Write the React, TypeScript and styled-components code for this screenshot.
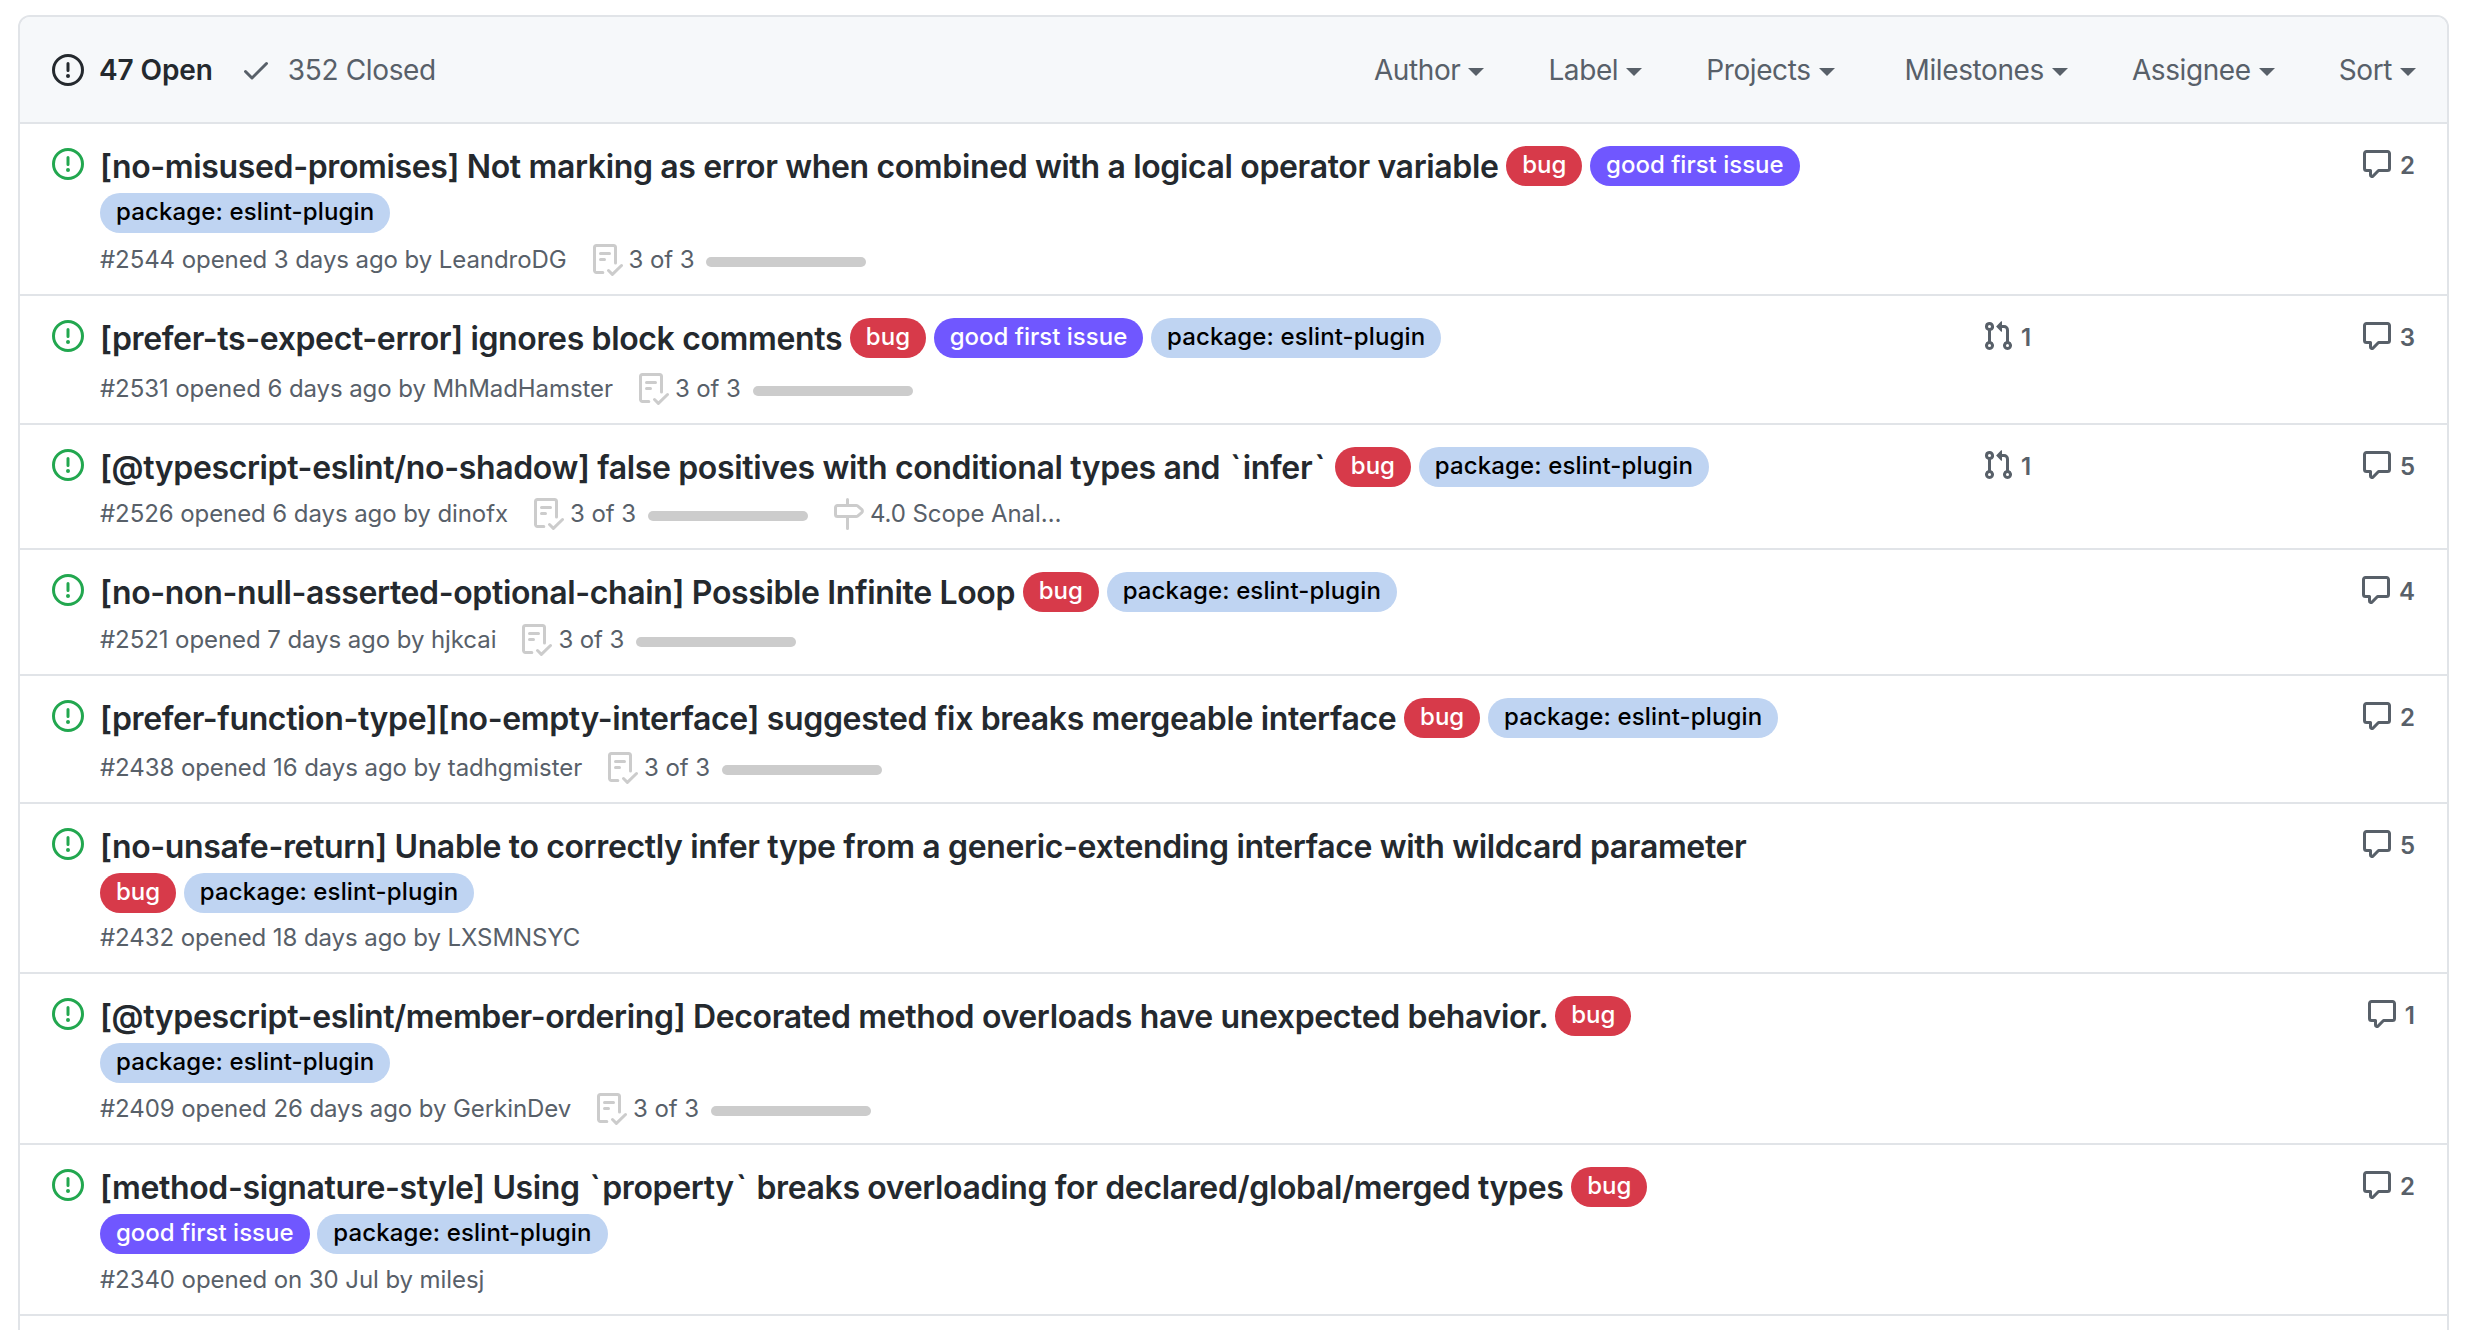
import React from "react";
import styled, { createGlobalStyle } from "styled-components";

const Global = createGlobalStyle`
  html, body { margin: 0; padding: 0; background: #fff; height: 1330px; overflow: hidden; }
  body { font-family: Inter, "Liberation Sans", sans-serif; color: #24292e; }
`;

const Page = styled.div`
  padding: 15px 17px 0 18px;
`;
const Box = styled.div`
  border: 2px solid #e1e4e8;
  border-radius: 12px;
  min-height: 1400px;
  box-sizing: border-box;
`;
const Header = styled.div`
  display: flex;
  align-items: center;
  justify-content: space-between;
  height: 105px;
  padding: 0 31px 0 32px;
  background: #f6f8fa;
  border-radius: 10px 10px 0 0;
  border-bottom: 2px solid #e1e4e8;
  font-size: 28px;
  line-height: 42px;
`;
const States = styled.div`
  display: flex;
  align-items: center;
  gap: 27px;
`;
const State = styled.span<{ $active?: boolean }>`
  display: inline-flex;
  align-items: center;
  gap: ${(p) => (p.$active ? 15 : 16)}px;
  font-weight: ${(p) => (p.$active ? 600 : 400)};
  letter-spacing: ${(p) => (p.$active ? "-0.1px" : "-0.35px")};
  color: ${(p) => (p.$active ? "#24292e" : "#586069")};
`;
const Filters = styled.div`
  display: flex;
  gap: 64px;
`;
const Filter = styled.span<{ $extra?: boolean }>`
  display: inline-flex;
  align-items: center;
  gap: 8px;
  margin-left: ${(p) => (p.$extra ? 6 : 0)}px;
  letter-spacing: -0.4px;
  color: #586069;
`;
const Caret = styled.i`
  display: inline-block;
  margin-top: 5px;
  border-style: solid;
  border-width: 8px 8px 0;
  border-color: #586069 transparent transparent;
`;
const Row = styled.div`
  display: grid;
  grid-template-columns: 48px 1720px 1fr 120px;
  padding: 19px 32px 16px 32px;
  border-bottom: 2px solid #e1e4e8;
`;
const Lead = styled.div`
  color: #22a74f;
  height: 32px;
  padding-top: 5px;
`;
const Main = styled.div``;
const Title = styled.div`
  font-size: 32px;
  font-weight: 600;
  line-height: 47px;
  letter-spacing: -0.36px;
  color: #24292e;
`;
const Tick = styled.span`
  padding: 0 2px;
`;
const Label = styled.span<{ $bg: string; $fg: string; $track: number }>`
  display: inline-block;
  height: 40px;
  padding: 0 16px;
  border-radius: 20px;
  font-size: 24px;
  font-weight: 500;
  line-height: 38px;
  letter-spacing: ${(p) => p.$track}px;
  vertical-align: 5px;
  background: ${(p) => p.$bg};
  color: ${(p) => p.$fg};
`;
const Meta = styled.div<{ $gap: number }>`
  display: flex;
  align-items: center;
  font-size: 24px;
  line-height: 36px;
  letter-spacing: -0.08px;
  margin-top: ${(p) => 5 + p.$gap}px;
  color: #586069;
`;
const Task = styled.span`
  display: inline-flex;
  align-items: center;
  margin-left: 24px;
  gap: 6px;
  color: #ccc;
`;
const TaskText = styled.span`
  color: #586069;
`;
const Bar = styled.span`
  display: inline-block;
  width: 160px;
  height: 10px;
  margin-left: 6px;
  margin-top: 3px;
  border-radius: 5px;
  background: #ccc;
`;
const Linked = styled.div`
  display: flex;
  gap: 7px;
  font-size: 24px;
  font-weight: 600;
  line-height: 36px;
  color: #586069;
  margin-top: 5px;
  padding-left: 162px;
`;
const Comments = styled.div`
  display: flex;
  justify-content: flex-end;
  gap: 7px;
  font-size: 24px;
  font-weight: 600;
  line-height: 36px;
  color: #586069;
  margin-top: 5px;
`;
const Glyph = styled.svg`
  display: block;
  flex: none;
  fill: currentColor;
`;

const paths = {
  issue:
    "M8 1.5a6.5 6.5 0 100 13 6.5 6.5 0 000-13zM0 8a8 8 0 1116 0A8 8 0 010 8zm9 3a1 1 0 11-2 0 1 1 0 012 0zm-.25-6.25a.75.75 0 00-1.5 0v3.5a.75.75 0 001.5 0v-3.5z",
  check:
    "M13.78 4.22a.75.75 0 010 1.06l-7.25 7.25a.75.75 0 01-1.06 0L2.22 9.28a.75.75 0 011.06-1.06L6 10.94l6.72-6.72a.75.75 0 011.06 0z",
  comment:
    "M2.75 2.5a.25.25 0 00-.25.25v7.5c0 .138.112.25.25.25h2a.75.75 0 01.75.75v2.19l2.72-2.72a.75.75 0 01.53-.22h4.5a.25.25 0 00.25-.25v-7.5a.25.25 0 00-.25-.25H2.75zM1 2.75C1 1.784 1.784 1 2.75 1h10.5c.966 0 1.75.784 1.75 1.75v7.5A1.75 1.75 0 0113.25 12H9.06l-2.573 2.573A1.457 1.457 0 014 13.543V12H2.75A1.75 1.75 0 011 10.25v-7.5z",
  pr: "M7.177 3.073L9.573.677A.25.25 0 0110 .854v4.792a.25.25 0 01-.427.177L7.177 3.427a.25.25 0 010-.354zM3.75 2.5a.75.75 0 100 1.5.75.75 0 000-1.5zm-2.25.75a2.25 2.25 0 113 2.122v5.256a2.251 2.251 0 11-1.5 0V5.372A2.25 2.25 0 011.5 3.25zM11 2.5h-1V4h1a1 1 0 011 1v5.628a2.251 2.251 0 101.5 0V5A2.5 2.5 0 0011 2.5zm1 10.25a.75.75 0 111.5 0 .75.75 0 01-1.5 0zM3.75 12a.75.75 0 100 1.5.75.75 0 000-1.5z",
  milestone:
    "M7.75 0a.75.75 0 01.75.75V3h3.634c.414 0 .814.147 1.13.414l2.07 1.75a1.75 1.75 0 010 2.672l-2.07 1.75a1.75 1.75 0 01-1.13.414H8.5v5.25a.75.75 0 11-1.5 0V10H2.75A1.75 1.75 0 011 8.25v-3.5C1 3.784 1.784 3 2.75 3H7V.75A.75.75 0 017.75 0zm0 8.5h4.384a.25.25 0 00.161-.06l2.07-1.75a.25.25 0 000-.38l-2.07-1.75a.25.25 0 00-.161-.06H2.75a.25.25 0 00-.25.25v3.5c0 .138.112.25.25.25h5z",
  tasks:
    "M2.5 1.75a.25.25 0 01.25-.25h8.5a.25.25 0 01.25.25v7.736a.75.75 0 101.5 0V1.75A1.75 1.75 0 0011.25 0h-8.5A1.75 1.75 0 001 1.75v11.5c0 .966.784 1.75 1.75 1.75h3.17a.75.75 0 000-1.5H2.75a.25.25 0 01-.25-.25V1.75zM4.75 4a.75.75 0 000 1.5h4.5a.75.75 0 000-1.5h-4.5zM4 7.75A.75.75 0 014.75 7h2a.75.75 0 010 1.5h-2A.75.75 0 014 7.75zm11.774 3.537a.75.75 0 00-1.048-1.074L10.7 14.145 9.281 12.72a.75.75 0 00-1.062 1.058l1.943 1.95a.75.75 0 001.055.008l4.557-4.45z",
};

const Icon = ({ name, size = 32 }: { name: keyof typeof paths; size?: number }) => (
  <Glyph width={size} height={size} viewBox="0 0 16 16">
    <path fillRule="evenodd" d={paths[name]} />
  </Glyph>
);

const labelStyles = {
  bug: { bg: "#d73a4a", fg: "#fff", text: "bug", track: 0 },
  good: { bg: "#7057ff", fg: "#fff", text: "good first issue", track: 0 },
  pkg: { bg: "#bfd4f2", fg: "#000", text: "package: eslint-plugin", track: 0.14 },
};
type LabelKey = keyof typeof labelStyles;

type Issue = {
  title: string;
  labels: LabelKey[];
  meta: string;
  gap: number;
  tasks?: boolean;
  milestone?: string;
  pr?: number;
  comments: number;
};

const issues: Issue[] = [
  { title: "[no-misused-promises] Not marking as error when combined with a logical operator variable", labels: ["bug", "good", "pkg"], meta: "#2544 opened 3 days ago by LeandroDG", gap: 0, tasks: true, comments: 2 },
  { title: "[prefer-ts-expect-error] ignores block comments", labels: ["bug", "good", "pkg"], meta: "#2531 opened 6 days ago by MhMadHamster", gap: 4, tasks: true, pr: 1, comments: 3 },
  { title: "[@typescript-eslint/no-shadow] false positives with conditional types and `infer`", labels: ["bug", "pkg"], meta: "#2526 opened 6 days ago by dinofx", gap: 0, tasks: true, milestone: "4.0 Scope Anal…", pr: 1, comments: 5 },
  { title: "[no-non-null-asserted-optional-chain] Possible Infinite Loop", labels: ["bug", "pkg"], meta: "#2521 opened 7 days ago by hjkcai", gap: 1, tasks: true, comments: 4 },
  { title: "[prefer-function-type][no-empty-interface] suggested fix breaks mergeable interface", labels: ["bug", "pkg"], meta: "#2438 opened 16 days ago by tadhgmister", gap: 3, tasks: true, comments: 2 },
  { title: "[no-unsafe-return] Unable to correctly infer type from a generic-extending interface with wildcard parameter", labels: ["bug", "pkg"], meta: "#2432 opened 18 days ago by LXSMNSYC", gap: -2, comments: 5 },
  { title: "[@typescript-eslint/member-ordering] Decorated method overloads have unexpected behavior.", labels: ["bug", "pkg"], meta: "#2409 opened 26 days ago by GerkinDev", gap: -1, tasks: true, comments: 1 },
  { title: "[method-signature-style] Using `property` breaks overloading for declared/global/merged types", labels: ["bug", "good", "pkg"], meta: "#2340 opened on 30 Jul by milesj", gap: -1, comments: 2 },
];

const filters = ["Author", "Label", "Projects", "Milestones", "Assignee", "Sort"];

const TitleText = ({ text }: { text: string }) => (
  <>
    {text.split(/(`)/).map((part, i) =>
      part === "`" ? <Tick key={i}>`</Tick> : <React.Fragment key={i}>{part}</React.Fragment>
    )}
  </>
);

export default function App() {
  return (
    <Page>
      <Global />
      <Box>
        <Header>
          <States>
            <State $active>
              <Icon name="issue" />
              47 Open
            </State>
            <State>
              <Icon name="check" />
              352 Closed
            </State>
          </States>
          <Filters>
            {filters.map((f) => (
              <Filter key={f} $extra={f === "Milestones"}>
                {f}
                <Caret />
              </Filter>
            ))}
          </Filters>
        </Header>
        {issues.map((it) => (
          <Row key={it.meta}>
            <Lead>
              <Icon name="issue" />
            </Lead>
            <Main>
              <Title>
                <TitleText text={it.title} />
                {it.labels.map((l) => (
                  <React.Fragment key={l}>
                    {" "}
                    <Label $bg={labelStyles[l].bg} $fg={labelStyles[l].fg} $track={labelStyles[l].track}>
                      {labelStyles[l].text}
                    </Label>
                  </React.Fragment>
                ))}
              </Title>
              <Meta $gap={it.gap}>
                {it.meta}
                {it.tasks && (
                  <Task>
                    <Icon name="tasks" />
                    <TaskText>3 of 3</TaskText>
                    <Bar />
                  </Task>
                )}
                {it.milestone && (
                  <Task>
                    <Icon name="milestone" />
                    <TaskText>{it.milestone}</TaskText>
                  </Task>
                )}
              </Meta>
            </Main>
            <Linked>
              {it.pr && (
                <>
                  <Icon name="pr" />
                  {it.pr}
                </>
              )}
            </Linked>
            <Comments>
              <Icon name="comment" />
              {it.comments}
            </Comments>
          </Row>
        ))}
      </Box>
    </Page>
  );
}
